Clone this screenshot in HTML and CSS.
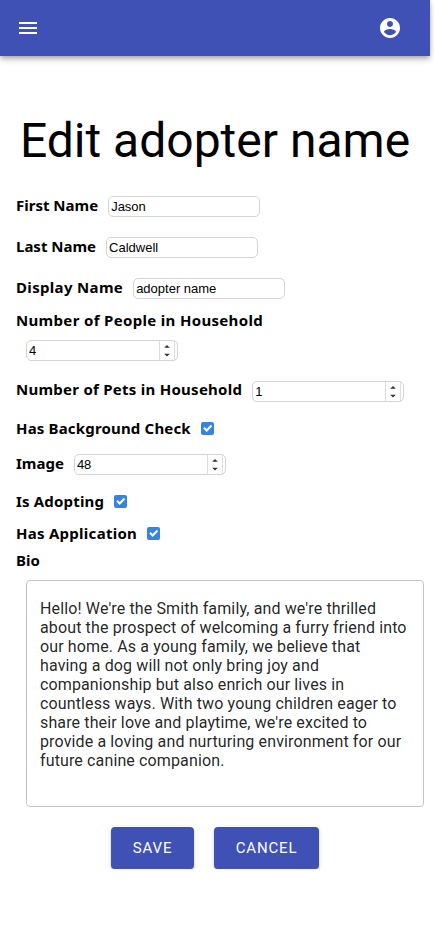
FILE: index.html
```html
<!DOCTYPE html>
<html lang="en">
<head>
<meta charset="utf-8">
<meta name="viewport" content="width=device-width">
<title>Edit adopter name</title>
<link rel="stylesheet" href="styles.css">
</head>
<body>
<header class="app-bar">
  <svg class="icon" viewBox="0 0 24 24"><path d="M3 18h18v-2H3v2zm0-5h18v-2H3v2zm0-7v2h18V6H3z"/></svg>
  <svg class="icon" viewBox="0 0 24 24"><path d="M12 2C6.48 2 2 6.48 2 12s4.48 10 10 10 10-4.48 10-10S17.52 2 12 2zm0 3c1.66 0 3 1.34 3 3s-1.34 3-3 3-3-1.34-3-3 1.34-3 3-3zm0 14.200c-2.500 0-4.710-1.280-6-3.220.030-1.990 4-3.080 6-3.080 1.990 0 5.970 1.090 6 3.080-1.290 1.940-3.500 3.220-6 3.220z"/></svg>
</header>
<main class="page">
  <h1 class="title">Edit adopter name</h1>
  <form class="form">
    <div class="row row-text"><label for="first">First Name</label><input class="field" id="first" type="text" value="Jason"></div>
    <div class="row row-text"><label for="last">Last Name</label><input class="field" id="last" type="text" value="Caldwell"></div>
    <div class="row row-text row-display"><label for="display">Display Name</label><input class="field" id="display" type="text" value="adopter name"></div>
    <div class="row row-stacked"><label for="people">Number of People in Household</label>
      <div class="field number"><input id="people" type="text" value="4"><svg class="spinner" viewBox="0 0 15 19"><path d="M4.500 6.500L7.500 3.500L10.500 6.500zM4.500 13L7.500 16L10.500 13z"/></svg></div></div>
    <div class="row row-pets"><label for="pets">Number of Pets in Household</label>
      <div class="field number"><input id="pets" type="text" value="1"><svg class="spinner" viewBox="0 0 15 19"><path d="M4.500 6.500L7.500 3.500L10.500 6.500zM4.500 13L7.500 16L10.500 13z"/></svg></div></div>
    <div class="row row-check"><label>Has Background Check</label><svg class="check" viewBox="0 0 13 13"><path d="M3 5.700L5.700 8.500L10.500 3.500"/></svg></div>
    <div class="row row-image"><label for="image">Image</label>
      <div class="field number"><input id="image" type="text" value="48"><svg class="spinner" viewBox="0 0 15 19"><path d="M4.500 6.500L7.500 3.500L10.500 6.500zM4.500 13L7.500 16L10.500 13z"/></svg></div></div>
    <div class="row row-adopting"><label>Is Adopting</label><svg class="check" viewBox="0 0 13 13"><path d="M3 5.700L5.700 8.500L10.500 3.500"/></svg></div>
    <div class="row row-application"><label>Has Application</label><svg class="check" viewBox="0 0 13 13"><path d="M3 5.700L5.700 8.500L10.500 3.500"/></svg></div>
    <div class="row row-bio"><label>Bio</label></div>
    <div class="bio">Hello! We're the Smith family, and we're thrilled about the prospect of welcoming a furry friend into our home. As a young family, we believe that having a dog will not only bring joy and companionship but also enrich our lives in countless ways. With two young children eager to share their love and playtime, we're excited to provide a loving and nurturing environment for our future canine companion.</div>
    <div class="actions"><button class="button save" type="button">SAVE</button><button class="button cancel" type="button">CANCEL</button></div>
  </form>
</main>
</body>
</html>
```
FILE: styles.css
```css
* { box-sizing: border-box; }
body { margin: 0; background: #fff; color: #000; font-family: Roboto, sans-serif; overflow: hidden; }
.app-bar {
  width: 430px; height: 56px; padding: 0 28px 0 16px;
  display: flex; align-items: center; justify-content: space-between;
  background: #3f51b5;
  box-shadow: 0 2px 4px -1px rgba(0,0,0,.2), 0 4px 5px rgba(0,0,0,.14), 0 1px 10px rgba(0,0,0,.12);
}
.icon { width: 24px; height: 24px; fill: #fff; }
.page { width: 430px; padding-top: 57px; }
.title { margin: 0; height: 56px; line-height: 56px; font-size: 48px; font-weight: 400; text-align: center; white-space: nowrap; }
.form { padding: 16px 0 0 16px; }
.row { display: flex; align-items: center; gap: 10px; }
.row label { font: 700 15px/20px "Noto Sans", sans-serif; white-space: nowrap; }
.row-text { height: 41px; padding-bottom: 1px; }
.row-text .field { margin-top: 3px; }
.row-display label { letter-spacing: .33px; }
.row-stacked { flex-direction: column; align-items: flex-start; height: 61px; padding-top: 2px; }
.row-stacked label { letter-spacing: .33px; }
.row-stacked .field { margin-left: 10px; }
.row-pets { height: 39px; }
.row-pets label { letter-spacing: .26px; }
.row-pets .field { margin-top: 5px; }
.row-check { height: 39px; }
.row-check label { letter-spacing: .17px; }
.row-check .check, .row-adopting .check { margin-top: 2px; }
.row-image { height: 32px; }
.row-image label { margin-top: -1px; }
.row-image .field { margin-top: 2px; }
.row-adopting { height: 43px; }
.row-adopting label { letter-spacing: .18px; }
.row-application { height: 22px; }
.row-application label { letter-spacing: .27px; }
.row-bio { height: 31px; margin-bottom: 5px; }
.field {
  width: 152px; height: 21px; padding: 0 2px;
  border: 1px solid #d4d4d4; border-radius: 5px; background: #fff;
  color: #000; font: 13px "Liberation Sans", sans-serif;
}
.number { display: flex; align-items: center; }
.number input { width: 130px; padding: 0; border: 0; background: none; font: inherit; }
.spinner { width: 16px; height: 19px; flex: none; border: solid #dedede; border-width: 0 1px; fill: #333; }
.check { width: 13px; height: 13px; border-radius: 2px; background: #3584e4; }
.check path { fill: none; stroke: #fff; stroke-width: 2; }
.bio {
  width: 398px; height: 227px; margin-left: 10px; padding: 18px 13px;
  border: 1px solid #c4c4c4; border-radius: 4px;
  color: rgba(0,0,0,.87); font-size: 16px; line-height: 19px; letter-spacing: .13px;
}
.actions { display: flex; justify-content: center; gap: 20px; margin: 20px 16px 0 0; }
.button {
  height: 42px; padding: 0; border: 0; border-radius: 4px;
  background: #3f51b5; color: #fff; font: 400 15px/26px Roboto, sans-serif; letter-spacing: .85px;
  box-shadow: 0 3px 1px -2px rgba(0,0,0,.2), 0 2px 2px rgba(0,0,0,.14), 0 1px 5px rgba(0,0,0,.12);
}
.save { width: 83px; }
.cancel { width: 105px; }
```
